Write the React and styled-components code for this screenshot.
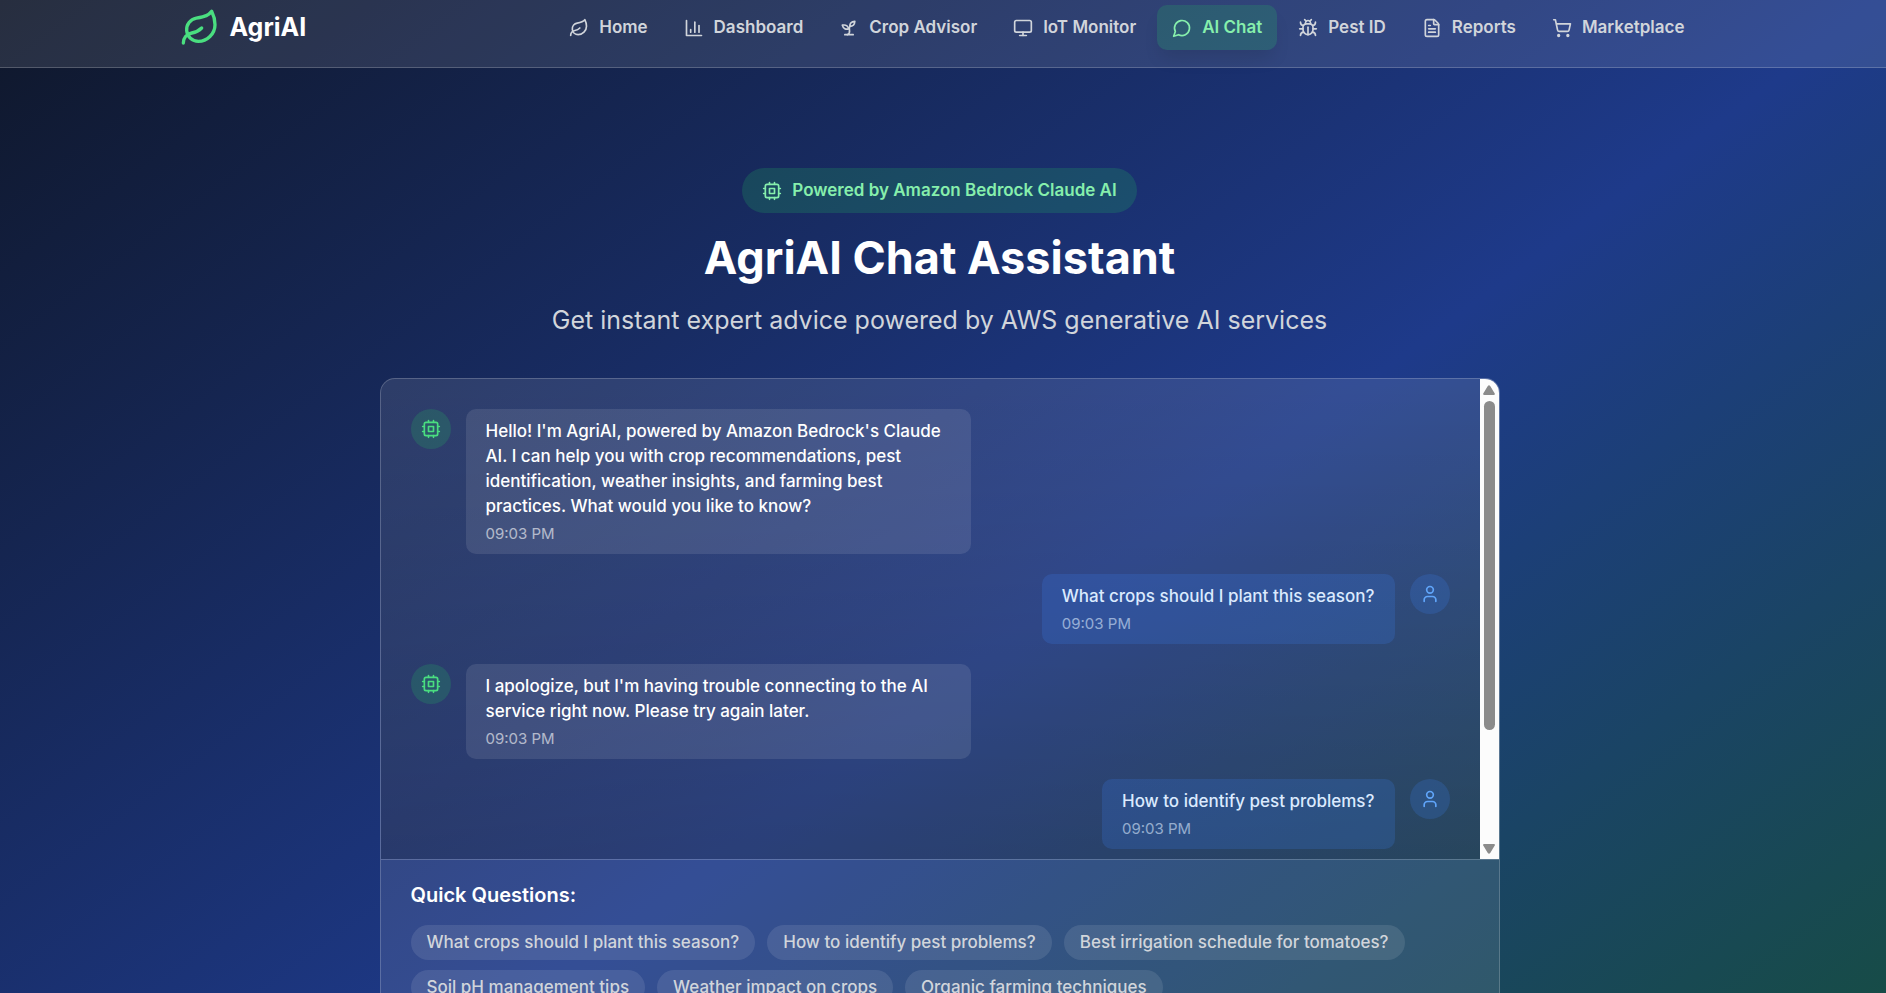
import React from "react";
import styled, { createGlobalStyle, css } from "styled-components";
import { FileText, Leaf, Monitor, ShoppingCart, User } from "lucide-react";

const GlobalStyle = createGlobalStyle`
  * {
    box-sizing: border-box;
  }

  body {
    margin: 0;
    background: #0f172a;
    font-family: Inter, "Liberation Sans", sans-serif;
  }
`;

const Page = styled.div`
  min-height: 140vh;
  background: linear-gradient(to bottom right, #0f172a, #1e3a8a, #14532d);
  color: #ffffff;
`;

const Header = styled.header`
  padding: 5px 7px 17px 0;
  background: rgba(255, 255, 255, 0.1);
  border-bottom: 1px solid rgba(255, 255, 255, 0.2);
`;

const HeaderInner = styled.div`
  display: flex;
  align-items: center;
  justify-content: space-between;
  max-width: 1600px;
  margin: 0 auto;
  padding: 0 40px;
`;

const Logo = styled.a`
  display: flex;
  align-items: center;
  gap: 10px;
  color: #ffffff;
  font-size: 25px;
  font-weight: 700;
  line-height: 35px;
  text-decoration: none;

  svg {
    color: #4ade80;
  }
`;

const Nav = styled.nav`
  display: flex;
  gap: 6px;
`;

const NavLink = styled.a`
  display: flex;
  align-items: center;
  gap: 10px;
  padding: 10px 15px;
  border-radius: 10px;
  color: #d1d5db;
  font-size: 17px;
  font-weight: 600;
  line-height: 25px;
  text-decoration: none;
  white-space: nowrap;

  ${({ $active }) =>
    $active &&
    css`
      background: rgba(34, 197, 94, 0.2);
      color: #86efac;
      box-shadow: 0 12px 18px -4px rgba(0, 0, 0, 0.1);
    `}
`;

const Main = styled.main`
  display: flex;
  flex-direction: column;
  align-items: center;
  padding: 100px 7px 40px 0;
`;

const Badge = styled.div`
  display: flex;
  align-items: center;
  gap: 10px;
  margin-bottom: 20px;
  padding: 10px 20px;
  border-radius: 24px;
  background: rgba(34, 197, 94, 0.2);
  color: #86efac;
  font-size: 17px;
  font-weight: 600;
  line-height: 25px;
`;

const Title = styled.h1`
  margin: 0 0 20px;
  font-size: 45px;
  font-weight: 700;
  line-height: 50px;
`;

const Subtitle = styled.p`
  margin: 0 0 40px;
  color: #d1d5db;
  font-size: 25px;
  line-height: 35px;
`;

const Card = styled.section`
  width: 100%;
  max-width: 1120px;
  overflow: hidden;
  border: 1px solid rgba(255, 255, 255, 0.2);
  border-radius: 15px;
  background: rgba(255, 255, 255, 0.1);
`;

const Conversation = styled.div`
  display: flex;
  height: 480px;
`;

const MessageList = styled.div`
  display: flex;
  flex: 1;
  flex-direction: column;
  gap: 20px;
  padding: 30px;
  overflow-y: auto;
  scrollbar-width: none;
  background: linear-gradient(to bottom, transparent, rgba(0, 0, 0, 0.2));
`;

const Message = styled.div`
  display: flex;
  flex-direction: ${({ $user }) => ($user ? "row-reverse" : "row")};
  align-items: flex-start;
  gap: 15px;
`;

const Avatar = styled.div`
  display: flex;
  flex-shrink: 0;
  align-items: center;
  justify-content: center;
  width: 40px;
  height: 40px;
  border-radius: 50%;
  background: ${({ $user }) =>
    $user ? "rgba(59, 130, 246, 0.2)" : "rgba(34, 197, 94, 0.2)"};
  color: ${({ $user }) => ($user ? "#60a5fa" : "#4ade80")};
`;

const Bubble = styled.div`
  max-width: 505px;
  padding: 10px 20px;
  border-radius: 10px;
  background: ${({ $user }) =>
    $user ? "rgba(59, 130, 246, 0.2)" : "rgba(255, 255, 255, 0.1)"};
  color: ${({ $user }) => ($user ? "#dbeafe" : "#ffffff")};
`;

const Text = styled.p`
  margin: 0;
  font-size: 17px;
  font-weight: 500;
  line-height: 25px;
`;

const Time = styled.p`
  margin: 5px 0 0;
  font-size: 15px;
  line-height: 20px;
  opacity: 0.6;
`;

const Scrollbar = styled.div`
  display: flex;
  flex-direction: column;
  align-items: center;
  justify-content: space-between;
  width: 19px;
  padding: 6px 0 5px;
  background: #fcfcfc;
  color: #8b8b8b;
`;

const Track = styled.div`
  flex: 1;
  padding: 6px 0;
`;

const Thumb = styled.div`
  width: 11px;
  height: 329px;
  border-radius: 6px;
  background: currentColor;
`;

const QuickQuestions = styled.div`
  padding: 20px 30px 30px;
  border-top: 1px solid rgba(255, 255, 255, 0.2);
`;

const QuickTitle = styled.h2`
  margin: 0 0 15px;
  font-size: 20px;
  font-weight: 600;
  line-height: 30px;
`;

const Chips = styled.div`
  display: flex;
  flex-wrap: wrap;
  gap: 10px 12px;
`;

const Chip = styled.button`
  padding: 5px 16px;
  border: 0;
  border-radius: 18px;
  background: rgba(255, 255, 255, 0.1);
  color: #d1d5db;
  font-family: inherit;
  font-size: 17px;
  font-weight: 500;
  line-height: 25px;
  cursor: pointer;
`;

const Icon = ({ size = 20, children }) => (
  <svg
    width={size}
    height={size}
    viewBox="0 0 24 24"
    fill="none"
    stroke="currentColor"
    strokeWidth="2"
    strokeLinecap="round"
    strokeLinejoin="round"
  >
    {children}
  </svg>
);

const BarChart = () => (
  <Icon>
    <path d="M3 3v18h18" />
    <path d="M18 17V9" />
    <path d="M13 17V5" />
    <path d="M8 17v-3" />
  </Icon>
);

const Sprout = () => (
  <Icon>
    <path d="M7 20h10" />
    <path d="M10 20c5.5-2.5.8-6.4 3-10" />
    <path d="M9.5 9.4c1.1.8 1.8 2.2 2.3 3.7-2 .4-3.5.4-4.8-.3-1.2-.6-2.3-1.9-3-4.2 2.8-.5 4.4 0 5.5.8z" />
    <path d="M14.1 6a7 7 0 0 0-1.1 4c1.9-.1 3.3-.6 4.3-1.4 1-1 1.6-2.3 1.7-4.6-2.7.1-4 1-4.9 2z" />
  </Icon>
);

const ChatBubble = () => (
  <Icon>
    <path d="M7.9 20A9 9 0 1 0 4 16.1L2 22Z" />
  </Icon>
);

const Bug = () => (
  <Icon>
    <path d="m8 2 1.88 1.88" />
    <path d="M14.12 3.88 16 2" />
    <path d="M9 7.13v-1a3.003 3.003 0 1 1 6 0v1" />
    <path d="M12 20c-3.3 0-6-2.7-6-6v-3a4 4 0 0 1 4-4h4a4 4 0 0 1 4 4v3c0 3.3-2.7 6-6 6" />
    <path d="M12 20v-9" />
    <path d="M6.53 9C4.6 8.8 3 7.1 3 5" />
    <path d="M6 13H2" />
    <path d="M3 21c0-2.1 1.7-3.9 3.8-4" />
    <path d="M20.97 5c0 2.1-1.6 3.8-3.5 4" />
    <path d="M22 13h-4" />
    <path d="M17.2 17c2.1.1 3.8 1.9 3.8 4" />
  </Icon>
);

const Cpu = () => (
  <Icon>
    <rect x="4" y="4" width="16" height="16" rx="2" />
    <rect x="9" y="9" width="6" height="6" />
    <path d="M15 2v2M15 20v2M2 15h2M2 9h2M20 15h2M20 9h2M9 2v2M9 20v2" />
  </Icon>
);

const Arrow = ({ down }) => (
  <svg width="12" height="10" viewBox="0 0 12 10" fill="currentColor">
    <path
      d={
        down
          ? "M1 0h10q1.5 .4 .6 1.8L7.2 9Q6 10.6 4.8 9L.4 1.8Q-.5 .4 1 0z"
          : "M1 10h10q1.5-.4 .6-1.8L7.2 1Q6-.6 4.8 1L.4 8.2Q-.5 9.6 1 10z"
      }
    />
  </svg>
);

const navItems = [
  { label: "Home", icon: <Leaf size={20} /> },
  { label: "Dashboard", icon: <BarChart /> },
  { label: "Crop Advisor", icon: <Sprout /> },
  { label: "IoT Monitor", icon: <Monitor size={20} /> },
  { label: "AI Chat", icon: <ChatBubble />, active: true },
  { label: "Pest ID", icon: <Bug /> },
  { label: "Reports", icon: <FileText size={20} /> },
  { label: "Marketplace", icon: <ShoppingCart size={20} /> },
];

const messages = [
  {
    text: "Hello! I'm AgriAI, powered by Amazon Bedrock's Claude AI. I can help you with crop recommendations, pest identification, weather insights, and farming best practices. What would you like to know?",
    time: "09:03 PM",
  },
  {
    user: true,
    text: "What crops should I plant this season?",
    time: "09:03 PM",
  },
  {
    text: "I apologize, but I'm having trouble connecting to the AI service right now. Please try again later.",
    time: "09:03 PM",
  },
  { user: true, text: "How to identify pest problems?", time: "09:03 PM" },
];

const questions = [
  "What crops should I plant this season?",
  "How to identify pest problems?",
  "Best irrigation schedule for tomatoes?",
  "Soil pH management tips",
  "Weather impact on crops",
  "Organic farming techniques",
];

const App = () => {
  return (
    <Page>
      <GlobalStyle />
      <Header>
        <HeaderInner>
          <Logo href="#">
            <Leaf size={40} />
            AgriAI
          </Logo>
          <Nav>
            {navItems.map(({ label, icon, active }) => (
              <NavLink key={label} href="#" $active={active}>
                {icon}
                {label}
              </NavLink>
            ))}
          </Nav>
        </HeaderInner>
      </Header>

      <Main>
        <Badge>
          <Cpu />
          Powered by Amazon Bedrock Claude AI
        </Badge>
        <Title>AgriAI Chat Assistant</Title>
        <Subtitle>
          Get instant expert advice powered by AWS generative AI services
        </Subtitle>

        <Card>
          <Conversation>
            <MessageList>
              {messages.map(({ user, text, time }) => (
                <Message key={text} $user={user}>
                  <Avatar $user={user}>
                    {user ? <User size={20} /> : <Cpu />}
                  </Avatar>
                  <Bubble $user={user}>
                    <Text>{text}</Text>
                    <Time>{time}</Time>
                  </Bubble>
                </Message>
              ))}
            </MessageList>
            <Scrollbar aria-hidden="true">
              <Arrow />
              <Track>
                <Thumb />
              </Track>
              <Arrow down />
            </Scrollbar>
          </Conversation>

          <QuickQuestions>
            <QuickTitle>Quick Questions:</QuickTitle>
            <Chips>
              {questions.map((question) => (
                <Chip key={question} type="button">
                  {question}
                </Chip>
              ))}
            </Chips>
          </QuickQuestions>
        </Card>
      </Main>
    </Page>
  );
};

export default App;
